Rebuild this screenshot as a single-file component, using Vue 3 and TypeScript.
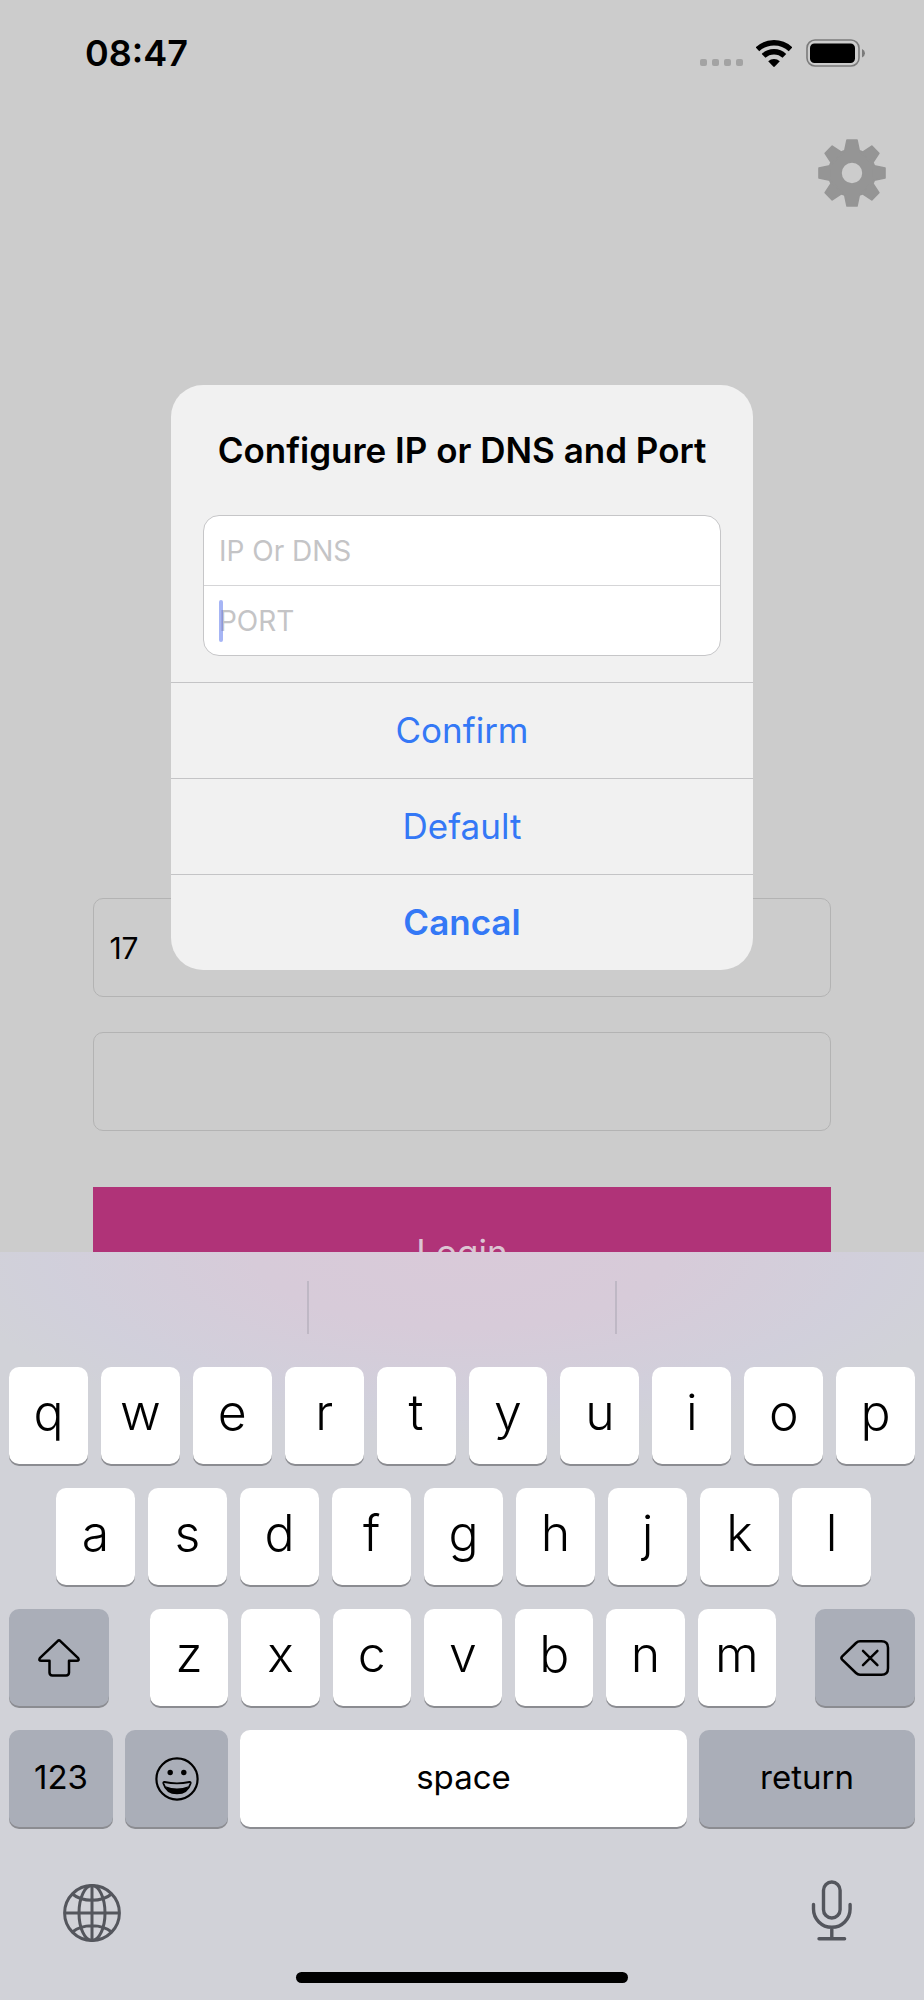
<script setup lang="ts">
import { ref } from 'vue'

const username = ref('17')
const password = ref('')
const host = ref('')
const port = ref('')

const topRow: string[] = [...'qwertyuiop']
const homeRow: string[] = [...'asdfghjkl']
const bottomRow: string[] = [...'zxcvbnm']
const teeth: number[] = [0, 45, 90, 135, 180, 225, 270, 315]
</script>

<template>
  <div class="screen">
    <main class="login">
      <header class="status">
        <time class="clock">08:47</time>
        <div class="indicators">
          <div class="signal"><i v-for="n in 4" :key="n"></i></div>
          <svg class="wifi" viewBox="0 0 36 27" aria-label="Wi-Fi">
            <g fill="none" stroke="#000" stroke-width="5.4">
              <path d="M1.4 9.3A24.3 24.3 0 0 1 34.6 9.3" />
              <path d="M7.6 15.9A15.2 15.2 0 0 1 28.4 15.9" />
            </g>
            <path d="M12.2 21.2A8.5 8.5 0 0 1 23.8 21.2L18.8 26.6Q18 27.3 17.2 26.6Z" />
          </svg>
          <svg class="battery" viewBox="0 0 60 28" aria-label="Battery">
            <rect x="1" y="1" width="52" height="26" rx="8" fill="none" stroke="#7b7b7b" stroke-width="1.6" />
            <rect x="4" y="4.5" width="45" height="19.5" rx="4.5" />
            <path d="M56 10Q59 11.500 59 14.200T56 18.400Z" fill="#7b7b7b" />
          </svg>
        </div>
      </header>

      <button class="settings" type="button" aria-label="Settings">
        <svg viewBox="-34 -34 68 68">
          <circle r="17.200" fill="none" stroke="#959595" stroke-width="14" />
          <path
            v-for="angle in teeth"
            :key="angle"
            :transform="`rotate(${angle})`"
            d="M-7.500 -21L-5 -33H5L7.500 -21Z"
            fill="#959595"
            stroke="#959595"
            stroke-width="1.600"
            stroke-linejoin="round"
          />
        </svg>
      </button>

      <form class="form" @submit.prevent>
        <input v-model="username" type="text" aria-label="Username" />
        <input v-model="password" type="password" aria-label="Password" />
        <button type="submit">Login</button>
      </form>
    </main>

    <div class="overlay">
      <div class="stage">
        <section class="dialog" role="dialog" aria-labelledby="dialog-title">
          <h1 id="dialog-title">Configure IP or DNS and Port</h1>
          <div class="fields">
            <input v-model="host" type="text" placeholder="IP Or DNS" aria-label="IP Or DNS" />
            <div class="port">
              <input v-model="port" type="text" placeholder="PORT" aria-label="PORT" />
              <span class="caret"></span>
            </div>
          </div>
          <div class="actions">
            <button type="button">Confirm</button>
            <button type="button">Default</button>
            <button type="button" class="strong">Cancal</button>
          </div>
        </section>
      </div>

      <section class="keyboard" aria-label="Keyboard">
        <div class="suggestions"><span></span><span></span><span></span></div>
        <div class="rows">
          <div class="row">
            <button v-for="k in topRow" :key="k" type="button" class="key">{{ k }}</button>
          </div>
          <div class="row home">
            <button v-for="k in homeRow" :key="k" type="button" class="key">{{ k }}</button>
          </div>
          <div class="row third">
            <button type="button" class="key dark" aria-label="Shift">
              <svg width="42" height="38" viewBox="0 0 42 38" fill="none" stroke="#000" stroke-width="2.500" stroke-linejoin="round">
                <path d="M19.900 1.800Q21 .9 22.100 1.800L40.200 19.200Q41.500 21.800 38.800 21.800H31V33.600Q31 36.500 28.100 36.500H14.400Q11.500 36.500 11.500 33.600V21.800H3.200Q.5 21.800 1.800 19.200Z" />
              </svg>
            </button>
            <div class="row letters">
              <button v-for="k in bottomRow" :key="k" type="button" class="key">{{ k }}</button>
            </div>
            <button type="button" class="key dark" aria-label="Delete">
              <svg width="50" height="36" viewBox="0 0 50 36" fill="none" stroke="#000" stroke-width="2.500" stroke-linecap="round" stroke-linejoin="round">
                <path d="M20 1.300H41.500Q48 1.300 48 7.800V28.200Q48 34.700 41.500 34.700H20Q17.800 34.700 16 33L2.200 19.700Q.6 18 2.200 16.300L16 3Q17.800 1.300 20 1.300Z" />
                <path d="M23 10.800L37.400 25.200M37.400 10.800L23 25.200" />
              </svg>
            </button>
          </div>
          <div class="row fourth">
            <button type="button" class="key dark word">123</button>
            <button type="button" class="key dark" aria-label="Emoji">
              <svg width="44" height="44" viewBox="-22 -22 44 44">
                <circle r="20.600" fill="none" stroke="#000" stroke-width="2.200" />
                <circle cx="-6.800" cy="-6.500" r="2.700" />
                <circle cx="6.800" cy="-6.500" r="2.700" />
                <path d="M-12.500 3Q0 5.800 12.500 3Q14 2.800 13.600 4.500C11.500 11.500 6 14.400 0 14.400S-11.500 11.500-13.600 4.500Q-14 2.800-12.500 3Z" fill="none" stroke="#000" stroke-width="1.800" />
                <path d="M-11.500 7.200Q0 11.600 11.500 7.200C9 12.500 5 14.600 0 14.600S-9 12.500-11.500 7.200Z" />
              </svg>
            </button>
            <button type="button" class="key word">space</button>
            <button type="button" class="key dark word">return</button>
          </div>
        </div>
        <div class="tools">
          <button type="button" aria-label="Next keyboard">
            <svg width="58" height="58" viewBox="-29 -29 58 58" fill="none" stroke="#54565d" stroke-width="3">
              <circle r="27.400" />
              <ellipse rx="13" ry="27.400" />
              <path d="M0 -27V27M-27 0H27M-19.600 -19Q-12 -12.700 0 -12.700T19.600 -19M-19.600 19Q-12 12.700 0 12.700T19.600 19" />
            </svg>
          </button>
          <button type="button" aria-label="Dictate">
            <svg width="42" height="62" viewBox="0 0 42 62" fill="none" stroke="#54565d" stroke-width="3.400" stroke-linecap="round">
              <rect x="12.500" y="2" width="16.600" height="36" rx="8.300" />
              <path d="M2.500 24.500V29A18.300 18.300 0 0 0 39.100 29V24.500M20.800 47.500V58.500M8 58.700H33.600" />
            </svg>
          </button>
        </div>
        <div class="home-bar"></div>
      </section>
    </div>
  </div>
</template>

<style>
body {
  margin: 0;
  background: #ccc;
}
</style>

<style scoped>
.screen {
  display: grid;
  min-height: 100vh;
  overflow: hidden;
  background: #ccc;
  color: #000;
  font-family: Inter, "Liberation Sans", sans-serif;
}

.login,
.overlay {
  grid-area: 1 / 1;
  min-width: 0;
}

button,
input {
  box-sizing: border-box;
  margin: 0;
  padding: 0;
  border: 0;
  border-radius: 0;
  outline: 0;
  background: none;
  color: inherit;
  font: inherit;
}

svg {
  display: block;
}

.login {
  display: flex;
  flex-direction: column;
}

.status {
  display: flex;
  justify-content: space-between;
  padding: 31px 58px 0 85px;
}

.clock {
  font-size: 36px;
  font-weight: 600;
  line-height: 44px;
}

.indicators {
  display: flex;
  align-items: flex-end;
  height: 36px;
}

.signal {
  display: flex;
  gap: 5px;
  margin: 0 13px 1px 0;
}

.signal i {
  width: 7px;
  height: 7px;
  border-radius: 2px;
  background: #a3a3a3;
}

.wifi {
  width: 36px;
  height: 27px;
  margin-right: 14px;
}

.battery {
  width: 60px;
  height: 28px;
}

.settings {
  align-self: flex-end;
  width: 68px;
  height: 68px;
  margin: 64px 38px 0 0;
}

.form {
  display: flex;
  flex-direction: column;
  margin: 691px 10% 0;
  padding: 0 1px;
}

.form input {
  height: 99px;
  margin-bottom: 35px;
  padding: 0 15px;
  border: 1px solid #b3b3b3;
  border-radius: 10px;
  font-size: 30px;
}

.form button {
  height: 130px;
  margin-top: 21px;
  background: #b03378;
  color: #dcc5d3;
  font-size: 35px;
}

.overlay {
  position: relative;
  display: flex;
  flex-direction: column;
}

.stage {
  display: flex;
  flex: 1;
  align-items: center;
  justify-content: center;
  padding-top: 102px;
}

.dialog {
  width: 63%;
  overflow: hidden;
  border-radius: 32px;
  background: #f1f1f1;
}

h1 {
  margin: 43px 0;
  font-size: 35px;
  font-weight: 600;
  line-height: 44px;
  text-align: center;
  white-space: nowrap;
}

.fields {
  margin: 0 32px 26px;
  overflow: hidden;
  border: 1px solid #c6c6c8;
  border-radius: 16px;
  background: #fff;
}

.fields input {
  display: block;
  width: 100%;
  height: 69px;
  padding: 2px 15px 0;
  font-size: 28px;
}

.fields input::placeholder {
  color: #c4c4c6;
  opacity: 1;
}

.port {
  position: relative;
  border-top: 1px solid #d5d5d7;
}

.caret {
  position: absolute;
  top: 14px;
  left: 15px;
  width: 4px;
  height: 42px;
  border-radius: 2px;
  background: rgba(78, 108, 235, 0.5);
}

.actions {
  display: flex;
  flex-direction: column;
}

.actions button {
  height: 96px;
  border-top: 1px solid #c4c4c6;
  color: #3478f6;
  font-size: 35px;
}

.actions .strong {
  font-weight: 600;
}

.keyboard {
  background:
    radial-gradient(ellipse 56% 190px at 50% 0, #d9cad9 0%, #d7cbd9 40%, rgba(209, 207, 220, 0.8) 80%, rgba(209, 210, 216, 0) 100%),
    #d1d2d8;
}

.suggestions {
  display: flex;
  height: 53px;
  padding: 29px 0 33px;
}

.suggestions span {
  flex: 1;
}

.suggestions span + span {
  border-left: 2px solid #bfb8c5;
}

.rows {
  display: flex;
  flex-direction: column;
  gap: 24px;
  padding: 0 9px;
}

.row {
  display: flex;
  gap: 13px;
}

.home {
  padding: 0 44px 0 47px;
}

.third {
  display: grid;
  grid-template-columns: 100fr 628fr 100fr;
  gap: 39px;
}

.letters {
  margin-left: 2px;
}

.fourth {
  display: grid;
  grid-template-columns: 104fr 103fr 447fr 216fr;
  gap: 12px;
}

.key {
  display: flex;
  flex: 1;
  align-items: center;
  justify-content: center;
  min-width: 0;
  height: 97px;
  padding-bottom: 8px;
  border-radius: 10px;
  background: #fff;
  box-shadow: 0 2px 0 #8b8c91;
  font-size: 50px;
  font-weight: 350;
}

.dark {
  padding-bottom: 0;
  background: #aaaeb8;
}

.word {
  padding-bottom: 4px;
  font-size: 33px;
  font-weight: 400;
}

.tools {
  display: flex;
  justify-content: space-between;
  align-items: flex-end;
  padding: 53px 71px 0 63px;
}

.home-bar {
  width: 36%;
  height: 11px;
  margin: 30px auto 17px;
  border-radius: 6px;
  background: #000;
}
</style>
